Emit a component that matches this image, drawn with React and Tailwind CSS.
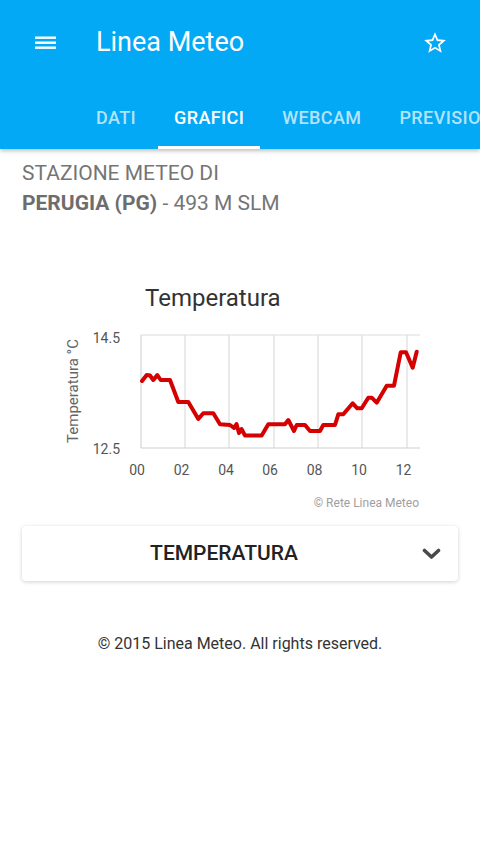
import React from 'react';

const font = { fontFamily: 'Roboto, "Noto Sans", sans-serif' };

const points = [
  [142, 381], [146.7, 375], [150, 375.5], [153.3, 380], [157.3, 375], [160.7, 380], [170, 380],
  [178.3, 402], [188.3, 402], [198.3, 419], [203.3, 413.3], [213.3, 413.3], [220, 424.3],
  [230, 425], [234, 428], [236.5, 424], [239, 433], [241.5, 429], [245, 435.5], [261.7, 435.5],
  [268.3, 424.3], [285, 424.3], [288.3, 420], [294, 431], [296.7, 425], [305, 425], [310, 431],
  [320, 431], [323.3, 425], [335, 425], [338.3, 414.3], [343.3, 414.3], [352.7, 403.3],
  [357.3, 408.3], [361.7, 408.3], [368.3, 397.7], [371.7, 397.7], [376.7, 402.7], [386.7, 385.7],
  [394, 385.7], [400.7, 352.3], [406, 352.3], [412.7, 367.7], [416.7, 351.7],
];

const gridX = [185, 229, 274, 318, 362, 407];
const labels = [
  ['00', 137], ['02', 181.5], ['04', 226], ['06', 270], ['08', 314.5], ['10', 359], ['12', 403.5],
];

const TempChart = () => (
  <svg className="block" width="480" height="260" viewBox="0 260 480 260" style={font}>
    <text x="145" y="306" fontSize="24" fill="#333">Temperatura</text>
    <text
      x="0" y="0" fontSize="15" fill="#666" textAnchor="middle"
      transform="translate(78 391) rotate(-90)"
    >
      Temperatura °C
    </text>
    <text x="120" y="343" fontSize="14" fill="#555" textAnchor="end">14.5</text>
    <text x="120" y="454" fontSize="14" fill="#555" textAnchor="end">12.5</text>
    {gridX.map(x => (
      <line key={x} x1={x} y1="335" x2={x} y2="448" stroke="#dcdcdc" strokeWidth="1.2" />
    ))}
    <line x1="141" y1="335" x2="420" y2="335" stroke="#dcdcdc" strokeWidth="1.2" />
    <line x1="141" y1="335" x2="141" y2="448" stroke="#d4d4d4" strokeWidth="1.2" />
    <line x1="141" y1="448" x2="420" y2="448" stroke="#d0d0d0" strokeWidth="1.2" />
    <polyline
      points={points.map(p => p.join(',')).join(' ')}
      fill="none" stroke="#d50000" strokeWidth="4" strokeLinejoin="round" strokeLinecap="round"
    />
    {labels.map(([t, x]) => (
      <text key={t} x={x} y="475" fontSize="14" fill="#555" textAnchor="middle">{t}</text>
    ))}
    <text x="419" y="507" fontSize="12" fill="#9e9e9e" textAnchor="end">© Rete Linea Meteo</text>
  </svg>
);

export default function App() {
  return (
    <div className="w-[480px] min-h-[853px] bg-white" style={font}>
      {/* App bar */}
      <header className="bg-[#03a9f4] text-white shadow-[0_2px_4px_rgba(0,0,0,0.25)] relative">
        <div className="h-[85px] flex items-center">
          <svg className="ml-[35px]" width="21" height="14" viewBox="0 0 21 14">
            <rect x="0" y="0.5" width="21" height="2.4" fill="white" />
            <rect x="0" y="5.5" width="21" height="2.4" fill="white" />
            <rect x="0" y="10.5" width="21" height="2.4" fill="white" />
          </svg>
          <h1 className="ml-[40px] text-[27px] font-normal">Linea Meteo</h1>
          <svg className="ml-auto mr-[32px]" width="26" height="26" viewBox="0 0 24 24" fill="white">
            <path d="M22 9.24l-7.19-.62L12 2 9.19 8.63 2 9.24l5.46 4.73L5.82 21 12 17.27 18.18 21l-1.63-7.03L22 9.24zM12 15.4l-3.76 2.27 1-4.28-3.32-2.88 4.38-.38L12 6.1l1.71 4.04 4.38.38-3.32 2.88 1 4.28L12 15.4z" />
          </svg>
        </div>
        <nav className="h-[64px] flex pl-[80px] gap-[6px] overflow-hidden whitespace-nowrap text-[18px] tracking-[0.4px] font-medium uppercase">
          <div className="px-4 flex items-center text-white/70">Dati</div>
          <div className="px-4 flex items-center text-white relative">
            Grafici
            <span className="absolute left-0 right-0 bottom-0 h-[3px] bg-white" />
          </div>
          <div className="px-4 flex items-center text-white/70">Webcam</div>
          <div className="px-4 flex items-center text-white/70">Previsioni</div>
        </nav>
      </header>

      {/* Station */}
      <div className="pt-[9px] px-[22px] text-[21px] leading-[30px] text-[#757575] uppercase">
        <div>Stazione meteo di</div>
        <div>
          <span className="font-bold text-[#6d6d6d]">Perugia (PG)</span> - 493 m slm
        </div>
      </div>

      <div className="mt-[42px]">
        <TempChart />
      </div>

      {/* Selector */}
      <div className="mx-[22px] mt-[6px] h-[55px] bg-white rounded-[4px] shadow-[0_1px_4px_rgba(0,0,0,0.18)] flex items-center">
        <div className="flex-1 text-center pl-[4px] text-[21px] font-medium text-[#222]">TEMPERATURA</div>
        <svg className="mr-[17px]" width="19" height="12" viewBox="0 0 19 12">
          <path d="M2.5 2.5 L9.5 9 L16.5 2.5" fill="none" stroke="#4a4a4a" strokeWidth="3.6" strokeLinecap="round" strokeLinejoin="round" />
        </svg>
      </div>

      <p className="mt-[51px] text-center text-[16px] text-[#333]">© 2015 Linea Meteo. All rights reserved.</p>
    </div>
  );
}
